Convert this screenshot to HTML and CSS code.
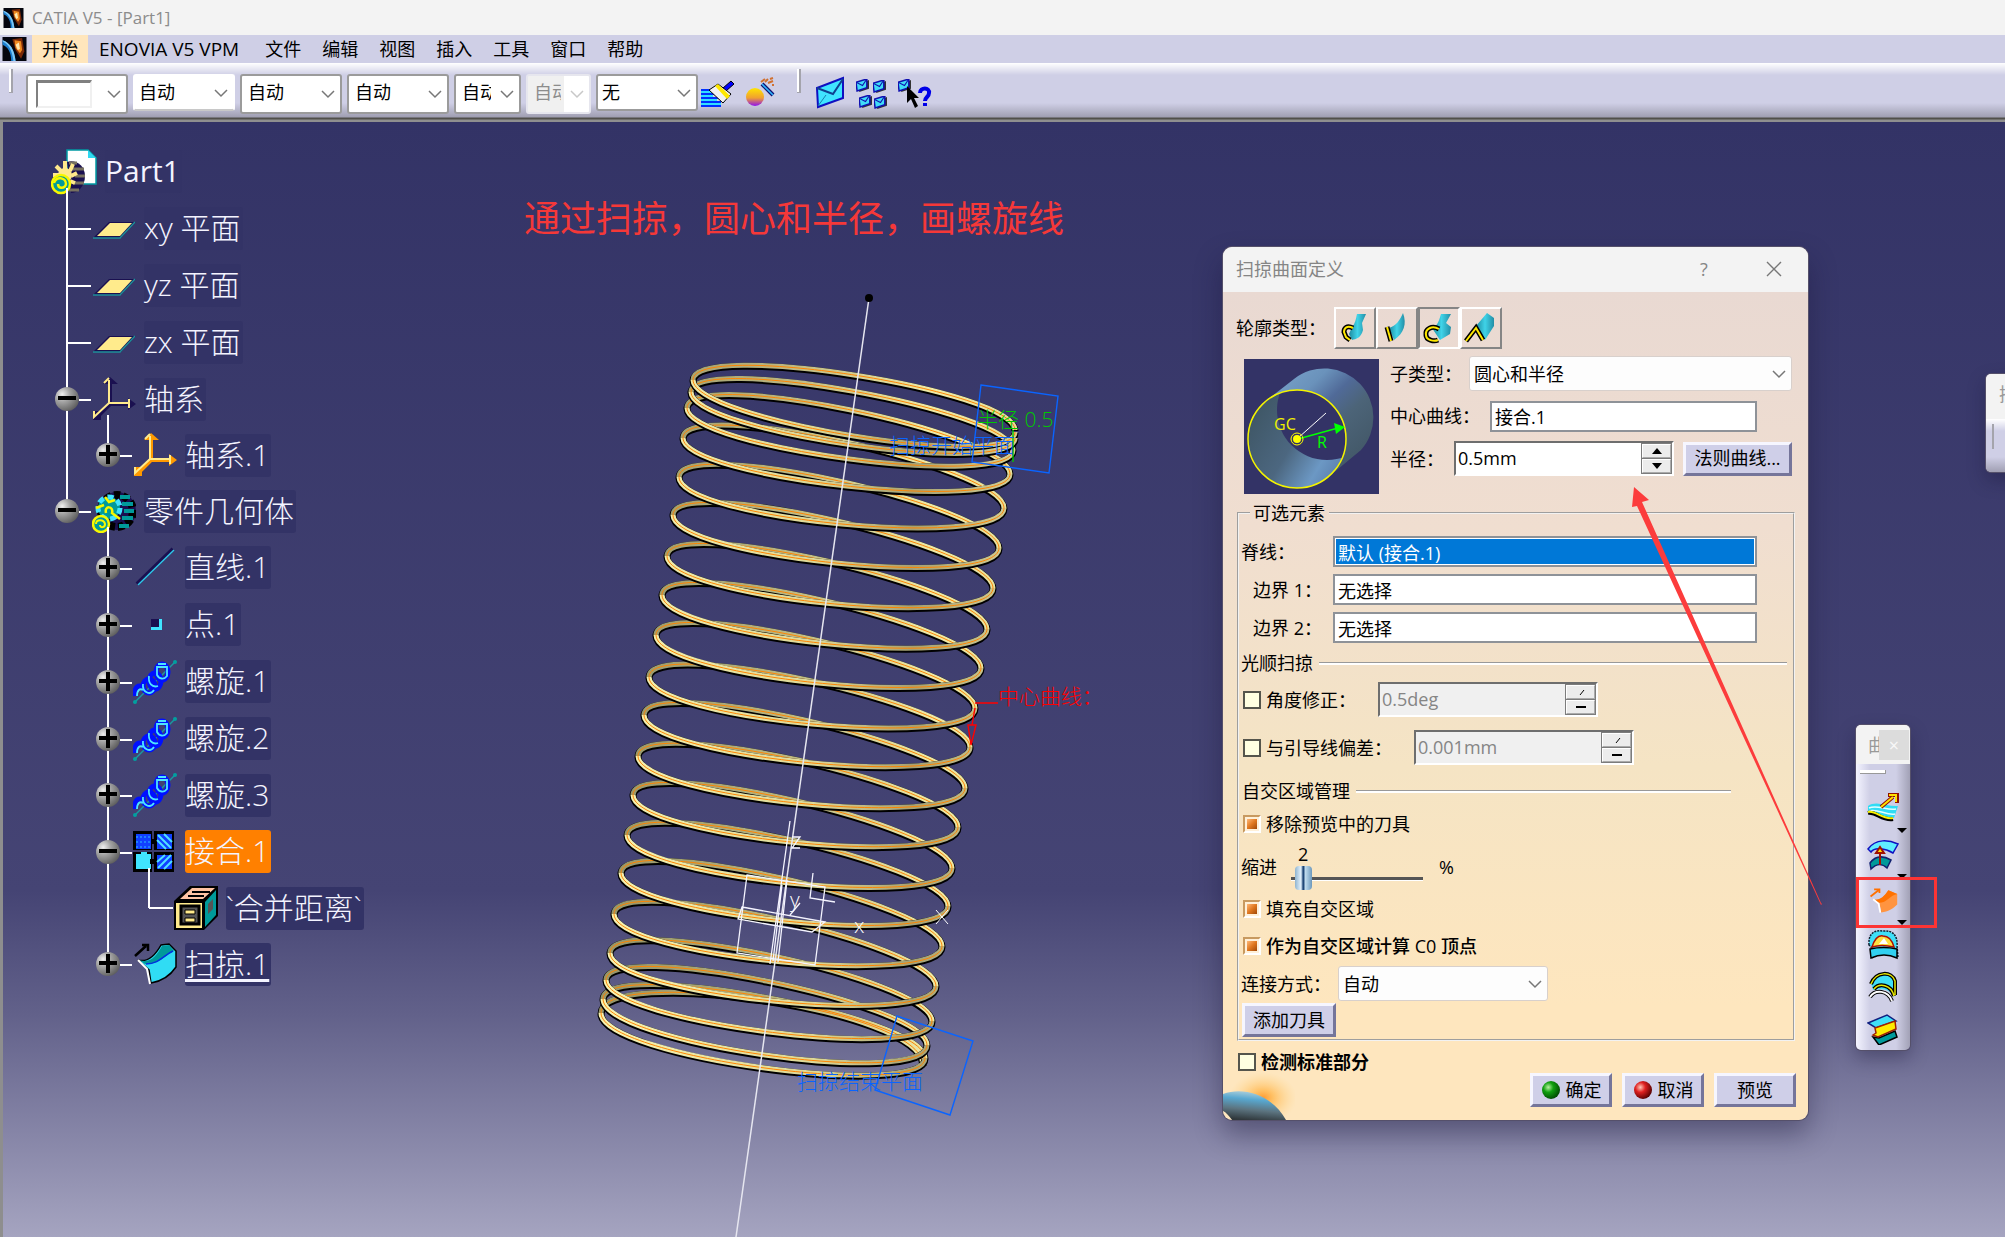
FILE: index.html
```html
<!DOCTYPE html>
<html lang="zh-CN">
<head>
<meta charset="utf-8">
<title>CATIA V5 - [Part1]</title>
<link rel="stylesheet" href="styles.css">
</head>
<body>
<svg class="defs" aria-hidden="true">
  <defs>
    <radialGradient id="ball" cx=".3" cy=".3" r=".8"><stop offset="0" stop-color="#f0f0f0"/><stop offset=".4" stop-color="#a4a4a4"/><stop offset="1" stop-color="#5a5a5a"/></radialGradient>
    <radialGradient id="green" cx=".35" cy=".35" r=".7"><stop offset="0" stop-color="#b8f0a0"/><stop offset=".4" stop-color="#10a010"/><stop offset="1" stop-color="#004800"/></radialGradient>
    <radialGradient id="red" cx=".35" cy=".35" r=".7"><stop offset="0" stop-color="#ffc8b8"/><stop offset=".4" stop-color="#e02020"/><stop offset="1" stop-color="#500000"/></radialGradient>
    <linearGradient id="sphere" x2="0" y2="1"><stop offset="0" stop-color="#ffe600"/><stop offset=".55" stop-color="#f0a030"/><stop offset="1" stop-color="#9010f0"/></linearGradient>
    <linearGradient id="sheet" x2="1"><stop offset="0" stop-color="#1d8ba0"/><stop offset=".5" stop-color="#3fd3e8"/><stop offset="1" stop-color="#238ea6"/></linearGradient>
    <symbol id="chev" viewBox="0 0 14 14"><path d="M1 4l6 6 6-6" fill="none" stroke="#777" stroke-width="1.5"/></symbol>
    <symbol id="logo" viewBox="0 0 22 22"><path fill="#05060e" d="M0 0h22v22H0z"/><path fill="#7a2a08" d="M9 2l9-1 2 12-3 7-5-8z"/><path fill="#f08a20" d="M11 3l6 1 1 8-2 3-4-5z"/><path fill="#ffe9b0" d="M12 7l3-2 1 6-2 1z"/><path fill="#1d7fd0" d="M0 3c7 2 11 9 12 19H8C8 14 5 9 0 7z"/><path fill="#7cc8f4" d="M0 3c7 2 11 9 12 19h-2C9 13 6 7 0 4z"/></symbol>
    <symbol id="plus" viewBox="0 0 24 24"><circle cx="12" cy="12" r="12" fill="url(#ball)"/><path d="M3 11h18M12 2v19" stroke="#000" stroke-width="4"/></symbol>
    <symbol id="minus" viewBox="0 0 24 24"><circle cx="12" cy="12" r="12" fill="url(#ball)"/><path d="M3 11h18" stroke="#000" stroke-width="4"/></symbol>
    <symbol id="plane" viewBox="0 0 44 44"><path d="M1 31L17 15h27L29 31z" fill="#1a1050"/><path d="M1 31h27l15-16" fill="none" stroke="#1f8f99" stroke-width="1.5"/><path d="M5 29l13-13h22L28 29z" fill="#ffeb8c"/></symbol>
    <symbol id="helix" viewBox="0 0 44 44"><path d="M1 43L43 1" stroke="#1a9aa0" stroke-width="1.5"/><circle cx="2" cy="42" r="2" fill="#00a0a0"/><circle cx="42" cy="2" r="2" fill="#00a0a0"/><g fill="none"><g stroke="#0010ff" stroke-width="5"><path d="M2 36c-1-10 4-12 9-8"/><ellipse cx="16" cy="26" rx="6" ry="7"/><ellipse cx="22" cy="21" rx="6" ry="8"/><ellipse cx="29" cy="12" rx="6" ry="8"/></g><g stroke="#4de4ff" stroke-width="1.8"><path d="M4 36c0-6 3-8 6-6M10 24c-1 8 7 12 11 6M16 16c-1 7 3 12 9 10"/><path d="M24 7h10v9c-3 4-8 3-10-1zM25 4h8"/></g></g></symbol>
    <symbol id="axes" viewBox="0 0 44 44"><path d="M18 5v22h23M18 27L4 41" fill="none" stroke="currentColor" stroke-width="4"/><path d="M18 0l8 7H11zM44 27l-8-6v12zM1 34h8v9H1z" fill="currentColor"/><path d="M17 3v23h21M17 26L2 40v-6M17 1l-5 5M37 22v9" fill="none" stroke="#ffeb8c" stroke-width="2"/></symbol>
    <symbol id="mini-mail" viewBox="0 0 12 12"><path d="M2 5l10-4v8L3 12z" fill="#333"/><path d="M0 3l10-3v8L1 11z" fill="#40dcf8" stroke="#1010b0" stroke-width="1.4"/><path d="M0 3l6 3 4-6" fill="none" stroke="#1010b0"/></symbol>
  </defs>
</svg>

<header class="titlebar"><svg class="app-icon"><use href="#logo"/></svg><span>CATIA V5 - [Part1]</span></header>

<nav class="menubar">
  <svg class="doc-icon"><use href="#logo"/></svg>
  <button class="menu active">开始</button><button class="menu latin">ENOVIA V5 VPM</button><button class="menu">文件</button><button class="menu">编辑</button><button class="menu">视图</button><button class="menu">插入</button><button class="menu">工具</button><button class="menu">窗口</button><button class="menu">帮助</button>
</nav>

<div class="toolbar">
  <span class="grip"></span>
  <div class="graphic">
    <div class="combo swatch"><select aria-label="颜色"><option></option></select><i></i><svg><use href="#chev"/></svg></div>
    <div class="combo short"><select aria-label="透明度"><option>自动</option></select><svg><use href="#chev"/></svg></div>
    <div class="combo"><select aria-label="线宽"><option>自动</option></select><svg><use href="#chev"/></svg></div>
    <div class="combo"><select aria-label="线型"><option>自动</option></select><svg><use href="#chev"/></svg></div>
    <div class="combo narrow"><select aria-label="点符号"><option>自动</option></select><svg><use href="#chev"/></svg></div>
    <div class="combo narrow off"><select aria-label="渲染样式" disabled><option>自动</option></select><svg><use href="#chev"/></svg></div>
    <div class="combo short none"><select aria-label="图层"><option>无</option></select><svg><use href="#chev"/></svg></div>
  </div>
  <div class="tools">
    <button class="tool" aria-label="格式刷"><svg viewBox="0 0 36 34"><g stroke-width="2"><path d="M0 14h14M0 18h15M0 22h18M0 26h20M0 30h20" stroke="#0030ff"/><path d="M0 16h10M0 20h12M0 24h16M0 28h20" stroke="#30dfff"/></g><path d="M22 12l8-7 3 3-8 7z" fill="#00f" stroke="#000"/><path d="M8 14l9-6 13 10-8 9z" fill="#f2f2f2" stroke="#000"/><path d="M14 10l12 13 3-3L17 8z" fill="#ffe800"/></svg></button>
    <button class="tool" aria-label="图形特性向导"><svg viewBox="0 0 36 34"><circle cx="12" cy="21" r="9" fill="url(#sphere)"/><path d="M19 8l11 11" stroke="#101070" stroke-width="4"/><path d="M19 8l11 11" stroke="#30b8ff" stroke-width="1.6"/><path d="M18 6l4-3M22 6l3-3M27 3l3-1M25 7l5-2M29 9h2" stroke="#d07030" stroke-width="2"/></svg></button>
    <span class="grip"></span>
    <button class="tool mail" aria-label="发送"><svg viewBox="0 0 36 34"><path d="M4 12L30 2v20L5 31z" fill="#40e4ff" stroke="#1010c0" stroke-width="2"/><path d="M4 12l16 6L30 3" fill="none" stroke="#104090" stroke-width="2"/><path d="M5 30l8-11" stroke="#1880b0"/></svg></button>
    <button class="tool" aria-label="发送到"><svg viewBox="0 0 36 34"><use href="#mini-mail" x="1" y="3" width="13" height="13"/><use href="#mini-mail" x="18" y="4" width="13" height="13"/><use href="#mini-mail" x="4" y="19" width="13" height="13"/><use href="#mini-mail" x="19" y="20" width="13" height="13"/></svg></button>
    <button class="tool" aria-label="这是什么？"><svg viewBox="0 0 36 34"><use href="#mini-mail" x="1" y="3" width="13" height="13"/><path d="M10 10v17l4-4 4 9 3-2-4-8h5z"/><path d="M23 17c0-6 10-6 9 0 0 4-4 4-4 8M28 27v3" fill="none" stroke="#0000e8" stroke-width="4"/></svg></button>
  </div>
</div>

<main class="viewport">
  <svg class="scene">
    <defs>
      <linearGradient id="frontTube" gradientUnits="userSpaceOnUse" x1="620" x2="1010" y1="0" y2="0"><stop offset="0" stop-color="#f6f2b0"/><stop offset=".5" stop-color="#ddd898"/><stop offset=".75" stop-color="#a4a174"/><stop offset="1" stop-color="#d2cd94"/></linearGradient>
      <linearGradient id="backTube" gradientUnits="userSpaceOnUse" x1="620" x2="1010" y1="0" y2="0"><stop offset="0" stop-color="#96966a"/><stop offset=".4" stop-color="#b8b480"/><stop offset=".8" stop-color="#efeaa6"/><stop offset="1" stop-color="#e4de9c"/></linearGradient>
      <path id="back" d="M693 380C693 340 1015 390 1015 430M691 392C691 352 1013 410 1013 450M687 408C687 366 1010 432 1010 474M683 438C683 396 1004 466 1004 508M679 477C679 435 999 506 999 548M673 515C673 473 993 546 993 588M667 556C667 514 987 587 987 629M662 595C662 553 981 626 981 668M656 635C656 593 975 666 975 708M649 677C649 635 970 705 970 747M644 715C644 673 965 746 965 788M638 756C638 714 958 785 958 827M633 795C633 753 952 826 952 868M627 835C627 793 948 864 948 906M621 873C621 831 942 904 942 946M614 914C614 872 936 944 936 986M610 953C610 911 932 979 932 1021M606 980C606 938 927 1003 927 1045M603 999C603 957 925 1016 925 1058M601 1013C601 965 923 1008 923 1065"/>
      <path id="front" d="M693 380C693 420 1015 472 1015 432M691 392C691 432 1015 478 1015 438M687 408C687 448 1013 490 1013 450M683 438C683 478 1010 514 1010 474M679 477C679 519 1004 550 1004 508M673 515C673 557 999 590 999 548M667 556C667 598 993 630 993 588M662 595C662 637 987 671 987 629M656 635C656 677 981 710 981 668M649 677C649 719 975 750 975 708M644 715C644 757 970 789 970 747M638 756C638 798 965 830 965 788M633 795C633 837 958 869 958 827M627 835C627 877 952 910 952 868M621 873C621 915 948 948 948 906M614 914C614 956 942 988 942 946M610 953C610 995 936 1028 936 986M606 980C606 1022 932 1063 932 1021M603 999C603 1043 927 1089 927 1045M601 1013C601 1057 925 1100 925 1058"/>
    </defs>
    <g transform="translate(-3 -122)" fill="none">
      <g class="coil">
        <use href="#back" stroke="#000" stroke-width="7" y="1"/><use href="#back" stroke="url(#backTube)" stroke-width="5"/><use href="#back" stroke="#ff8400" stroke-width="1"/>
        <use href="#front" stroke="#000" stroke-width="7" y="1"/><use href="#front" stroke="url(#frontTube)" stroke-width="5"/><use href="#front" stroke="#ff8400" stroke-width="1"/>
      </g>
      <path d="M869 298L736 1237" stroke="#e6e6f0" stroke-width="1.5"/>
      <circle cx="869" cy="298" r="4" fill="#000"/>
      <g stroke="#f4f4ff" stroke-width="1.3">
        <path d="M747 875L825 887L815 965L737 953zM742 907L825 922L812 932L738 919zM790 821L770 964M782 885l-9 76M787 880l-9 82M813 873l-3 25 25 4M792 837h8l-8 11h8M790 915l10-12"/>
      </g>
      <g stroke="#0a64ff" stroke-width="1.4"><path d="M981 385L1058 396L1049 473L972 462zM897 1016L973 1041L950 1115L875 1090z"/></g>
      <path d="M975 703h23M975 708l-3 17h-4l3 20 5-20h-4" stroke="#f00" stroke-width="1.4"/>
      <path d="M1013 430v32" stroke="#00c800" stroke-width="1.4"/>
      <path d="M936 910l12 14M948 910l-12 14" stroke="#fff"/>
      <g class="marks" stroke="none">
        <text x="977" y="427" fill="#00c800">半径 0.5</text>
        <text x="889" y="453" fill="#0a64ff">扫掠开始平面</text>
        <text x="797" y="1089" fill="#0a64ff">扫掠结束平面</text>
        <text x="998" y="704" fill="#f00">中心曲线：</text>
        <text x="790" y="907" fill="#fff">y</text>
        <text x="854" y="933" fill="#fff">x</text>
      </g>
    </g>
  </svg>

  <p class="note">通过扫掠，圆心和半径，画螺旋线</p>

  <section class="tree">
    <div class="row root"><svg class="part" viewBox="0 0 46 46"><path d="M16 1h21l8 8v26H16z" fill="#fff" stroke="#009aa4" stroke-width="1.5"/><path d="M37 1v8h8z" fill="#30d8f0"/><path d="M16 13c8-3 18 3 18 14s-8 17-14 17z" fill="#1a1050"/><path d="M18 14h8M22 20h11M24 27h10M22 34h11M18 41h10" stroke="#77715f" stroke-width="3"/><path d="M14 12v8M5 17l5 5M22 15l-3 7M2 26h8M26 24l-6 3M24 34l-5-2" stroke="#ffe98c" stroke-width="4"/><circle cx="14" cy="26" r="7" fill="#ffe98c"/><circle cx="10" cy="35" r="9" fill="#009a9a" stroke="#f8f800" stroke-width="2.5"/><path d="M3 34c2-7 12-6 12 1-1 5-8 5-8 0" fill="none" stroke="#f8f800" stroke-width="2.5"/></svg><span class="name">Part1</span></div>
    <ul>
      <li><div class="row"><i class="tick"></i><svg class="ico"><use href="#plane"/></svg><span class="name">xy 平面</span></div></li>
      <li><div class="row"><i class="tick"></i><svg class="ico"><use href="#plane"/></svg><span class="name">yz 平面</span></div></li>
      <li><div class="row"><i class="tick"></i><svg class="ico"><use href="#plane"/></svg><span class="name">zx 平面</span></div></li>
      <li><div class="row tight"><button class="knob" aria-label="收起"><svg><use href="#minus"/></svg></button><svg class="ico"><use href="#axes"/></svg><span class="name">轴系</span></div>
        <ul><li><div class="row tight"><button class="knob" aria-label="展开"><svg><use href="#plus"/></svg></button><svg class="ico bright"><use href="#axes"/></svg><span class="name">轴系.1</span></div></li></ul>
      </li>
      <li><div class="row tight"><button class="knob" aria-label="收起"><svg><use href="#minus"/></svg></button><svg class="ico" viewBox="0 0 44 44"><circle cx="25" cy="22" r="19" fill="#1a1050"/><circle cx="25" cy="22" r="16" fill="none" stroke="#000" stroke-width="8" stroke-dasharray="6 3"/><path d="M28 8h10M30 15h11M32 22h10M30 29h11M27 37h10" stroke="#009a9a" stroke-width="4"/><circle cx="17" cy="19" r="11" fill="#009a9a" stroke="#40e4ff" stroke-width="5" stroke-dasharray="6 4"/><path d="M13 8l4 5 6-2M4 19l8-3M14 24c-2-8 8-7 6 0l8 6" fill="none" stroke="#f8f800" stroke-width="2.5"/><circle cx="9" cy="35" r="8" fill="#009a9a" stroke="#f8f800" stroke-width="2.5"/><path d="M4 35c0-5 8-5 9 0 0 4-5 4-5 1" fill="none" stroke="#f8f800" stroke-width="2"/></svg><span class="name">零件几何体</span></div>
        <ul>
          <li><div class="row"><button class="knob" aria-label="展开"><svg><use href="#plus"/></svg></button><svg class="ico" viewBox="0 0 44 44"><path d="M4 38L40 3" stroke="#1a1050" stroke-width="4"/><path d="M5 39L41 4" stroke="#30c8e8" stroke-width="1.5"/></svg><span class="name">直线.1</span></div></li>
          <li><div class="row"><button class="knob" aria-label="展开"><svg><use href="#plus"/></svg></button><svg class="ico" viewBox="0 0 44 44"><path d="M18 16h11v11H18z" fill="#40e4ff"/><path d="M18 16h8v8h-8z" fill="#1a1050"/></svg><span class="name">点.1</span></div></li>
          <li><div class="row"><button class="knob" aria-label="展开"><svg><use href="#plus"/></svg></button><svg class="ico"><use href="#helix"/></svg><span class="name">螺旋.1</span></div></li>
          <li><div class="row"><button class="knob" aria-label="展开"><svg><use href="#plus"/></svg></button><svg class="ico"><use href="#helix"/></svg><span class="name">螺旋.2</span></div></li>
          <li><div class="row tight"><button class="knob" aria-label="展开"><svg><use href="#plus"/></svg></button><svg class="ico"><use href="#helix"/></svg><span class="name">螺旋.3</span></div></li>
          <li><div class="row"><button class="knob" aria-label="收起"><svg><use href="#minus"/></svg></button><svg class="ico" viewBox="0 0 44 44"><path d="M0 1h41v41H0z" fill="#000"/><path d="M3 4h15v15H3zM24 4h15v15H24zM24 25h15v14H24z" fill="#1040ff"/><path d="M3 24h5v-3h6v3h4v15H3z" fill="#40e4ff"/><path d="M3 7h15M3 12h15M3 17h15" stroke="#30c0f8" stroke-dasharray="2 2"/><path d="M25 5l13 13M31 4l8 8M24 10l9 9M25 38l13-13M24 32l8-7M31 39l8-8" stroke="#50e0ff" stroke-width="2"/><path d="M20 0v42M0 21h42" stroke="#3c3c6c" stroke-width="2"/><path d="M18 9h5v5h-5zM17 29h5v5h-5z"/></svg><span class="name selected">接合.1</span></div>
            <ul><li><div class="row tight"><i class="tick"></i><svg class="ico" viewBox="0 0 44 44"><path d="M0 15L16 0h28v30L30 44H0z" fill="#000"/><path d="M6 13L18 2h23L29 13z" fill="#ffc4a4"/><path d="M14 10h16M18 6h18" stroke="#000" stroke-width="2"/><path d="M31 16L42 4v25L31 41z" fill="#009a9a"/><path d="M34 18v10l5-5V13z" fill="#555"/><path d="M2 17h26v25H2z" fill="#ffeb8c"/><path d="M7 20h18v18H7z" fill="#555" stroke="#000" stroke-width="3"/><path d="M11 24h10v4H11zM11 32h10v4H11z" fill="#ffeb8c" stroke="#000"/></svg><span class="name">`合并距离`</span></div></li></ul>
          </li>
          <li><div class="row tight"><button class="knob" aria-label="展开"><svg><use href="#plus"/></svg></button><svg class="ico" viewBox="0 0 44 44"><path d="M2 14L13 4M9 3h6v6" fill="none" stroke="#000" stroke-width="2.5"/><path d="M5 18c10 3 18-6 23-15l8-1 7 7v16c-6 9-13 14-25 16L16 28z" fill="#30dcf4" stroke="#000" stroke-width="1.5"/><path d="M6 18c12 4 18-5 23-14l7-1 5 6C30 14 28 22 12 22z" fill="#009a9a"/><path d="M13 22c13 0 18-9 27-13" fill="none" stroke="#0030e0" stroke-width="1.5"/><path d="M5 18l9 9 3 15" fill="none" stroke="#fff" stroke-width="2"/></svg><span class="name current">扫掠.1</span></div></li>
        </ul>
      </li>
    </ul>
  </section>

  <section class="dialog" role="dialog" aria-label="扫掠曲面定义">
    <header><h2>扫掠曲面定义</h2><button aria-label="帮助">?</button><button aria-label="关闭"><svg viewBox="0 0 16 16"><path d="M1 1l14 14M15 1L1 15" stroke="#777" stroke-width="1.4"/></svg></button></header>
    <form>
      <div class="profile"><span>轮廓类型：</span>
        <button type="button" aria-label="显式"><svg viewBox="0 0 36 36"><path d="M20 4h9l-4 9 1 7c-2 8-7 9-11 10l-3-6 3-7c3-3 4-8 5-13z" fill="url(#sheet)"/><path class="pf" d="M16 18c-6-3-9 0-9 4l2 5 4 3"/><path class="py" d="M16 18c-6-3-9 0-9 4l2 5 4 3"/></svg></button>
        <button type="button" aria-label="直线"><svg viewBox="0 0 36 36"><path d="M24 3c4 11 1 20-9 27L10 18c7-2 11-8 14-15z" fill="url(#sheet)"/><path class="pf" d="M8 17l4 14"/><path class="py" d="M8 17l4 14"/></svg></button>
        <button type="button" class="down" aria-label="圆"><svg viewBox="0 0 36 36"><path d="M20 4h10l-5 9 5 4-1 7-10 6-8-12c5-1 7-7 9-14z" fill="url(#sheet)"/><path class="pf" d="M18 19c-7-4-14 0-13 6 0 5 8 7 12 5"/><path class="py" d="M18 19c-7-4-14 0-13 6 0 5 8 7 12 5"/></svg></button>
        <button type="button" aria-label="二次曲线"><svg viewBox="0 0 36 36"><path d="M24 3l7 5v8l-9 14-9-14z" fill="url(#sheet)"/><path class="pf" d="M3 31l10-13 7 12"/><path class="py" d="M3 31l10-13 7 12"/></svg></button>
      </div>
      <div class="params">
        <svg class="preview" viewBox="0 0 135 135"><defs><linearGradient id="tube" x1="0" y1="0" x2="1" y2="1"><stop offset="0" stop-color="#7fa9d0"/><stop offset=".3" stop-color="#6a92bb"/><stop offset=".45" stop-color="#506a98"/><stop offset=".6" stop-color="#4c6478"/><stop offset="1" stop-color="#3e5260"/></linearGradient><linearGradient id="inner" x1="0" x2="1" y1=".4" y2="1"><stop offset="0" stop-color="#405868"/><stop offset=".4" stop-color="#4c6780"/><stop offset=".7" stop-color="#6c98c4"/><stop offset="1" stop-color="#5070a0"/></linearGradient><clipPath id="mouth"><circle cx="53" cy="80" r="49"/></clipPath></defs><path fill="#333366" d="M0 0h135v135H0z"/><path d="M18 45L50 20A49 49 0 0 1 117 91L88 115z" fill="url(#tube)"/><circle cx="53" cy="80" r="49" fill="url(#inner)"/><circle cx="83" cy="51" r="50" fill="#333366" clip-path="url(#mouth)"/><circle cx="53" cy="80" r="49" fill="none" stroke="#f4f400" stroke-width="1.5"/><path d="M54 79l28-25" stroke="#fff"/><path d="M54 80l40-11" stroke="#0f0" stroke-width="1.5"/><path d="M90 64l11 4-9 7z" fill="#0f0"/><circle cx="53" cy="80" r="6" fill="none" stroke="#ff0"/><circle cx="53" cy="80" r="4" fill="#ff0"/><text x="30" y="71" fill="#f0f000">GC</text><text x="73" y="89" fill="#0f0">R</text></svg>
        <div class="fields">
          <div class="field"><label for="sub">子类型：</label><div class="combo wide"><select id="sub"><option>圆心和半径</option></select><svg><use href="#chev"/></svg></div></div>
          <div class="field center"><label for="cc">中心曲线：</label><input id="cc" class="box" value="接合.1"></div>
          <div class="field radius"><label for="rad">半径：</label><div class="spin"><input id="rad" value="0.5mm"><span><button type="button" aria-label="增加"><svg viewBox="0 0 10 6"><path d="M5 0l5 6H0z"/></svg></button><button type="button" aria-label="减少"><svg viewBox="0 0 10 6"><path d="M5 6L0 0h10z"/></svg></button></span></div><button type="button" class="push law">法则曲线...</button></div>
        </div>
      </div>
      <fieldset>
        <legend>可选元素</legend>
        <div class="elements">
          <label for="spine">脊线：</label><input id="spine" class="box picked" value="默认 (接合.1)">
          <label for="b1" class="in">边界 1：</label><input id="b1" class="box" value="无选择">
          <label for="b2" class="in">边界 2：</label><input id="b2" class="box" value="无选择">
        </div>
        <h3 class="smooth">光顺扫掠</h3>
        <div class="opt"><label class="check"><input type="checkbox">角度修正：</label><div class="spin off"><input value="0.5deg" aria-label="角度修正值" disabled><span><button type="button" disabled aria-label="增加"><svg viewBox="0 0 10 6"><path d="M4 6l4-5" stroke="#000"/></svg></button><button type="button" disabled aria-label="减少"><svg viewBox="0 0 10 6"><path d="M0 2h10v2H0z"/></svg></button></span></div></div>
        <div class="opt second"><label class="check"><input type="checkbox">与引导线偏差：</label><div class="spin off"><input value="0.001mm" aria-label="偏差值" disabled><span><button type="button" disabled aria-label="增加"><svg viewBox="0 0 10 6"><path d="M4 6l4-5" stroke="#000"/></svg></button><button type="button" disabled aria-label="减少"><svg viewBox="0 0 10 6"><path d="M0 2h10v2H0z"/></svg></button></span></div></div>
        <h3 class="twist">自交区域管理</h3>
        <label class="check row-check"><input type="checkbox" checked>移除预览中的刀具</label>
        <div class="setback"><label for="sb">缩进</label><div class="slide"><output for="sb">2</output><input id="sb" type="range" min="0" max="60" value="2"></div><span>%</span></div>
        <label class="check fill"><input type="checkbox" checked>填充自交区域</label>
        <label class="check strong"><input type="checkbox" checked>作为自交区域计算 C0 顶点</label>
        <div class="connect"><label for="cm">连接方式：</label><div class="combo wide"><select id="cm"><option>自动</option></select><svg><use href="#chev"/></svg></div></div>
        <button type="button" class="push add">添加刀具</button>
      </fieldset>
      <label class="check canon"><input type="checkbox">检测标准部分</label>
      <footer>
        <button type="button" class="push"><svg viewBox="0 0 20 20"><circle cx="10" cy="10" r="9" fill="url(#green)"/></svg>确定</button>
        <button type="button" class="push"><svg viewBox="0 0 20 20"><circle cx="10" cy="10" r="9" fill="url(#red)"/></svg>取消</button>
        <button type="button" class="push">预览</button>
      </footer>
    </form>
    <svg class="globe" viewBox="0 0 72 48"><defs><radialGradient id="sun"><stop offset="0" stop-color="#ff9a30"/><stop offset=".3" stop-color="#ffb850" stop-opacity=".8"/><stop offset="1" stop-color="#ffd890" stop-opacity="0"/></radialGradient><linearGradient id="earth" x1=".6" y1="0" x2=".4" y2="1"><stop offset="0" stop-color="#b8d4dc"/><stop offset=".3" stop-color="#58a8d0"/><stop offset=".65" stop-color="#5c7480"/><stop offset="1" stop-color="#30383c"/></linearGradient></defs><ellipse cx="40" cy="26" rx="34" ry="26" fill="url(#sun)"/><path d="M0 22C22 14 50 24 63 48H9C6 44 3 40 0 39z" fill="url(#earth)"/></svg>
  </section>

  <aside class="palette" aria-label="曲面">
    <header><span>曲</span><button aria-label="关闭">×</button></header>
    <i class="bar"></i>
    <button class="tool more" aria-label="拉伸"><svg viewBox="0 0 32 32"><path d="M1 13c8-6 20 1 30 0l-4 12C17 26 9 18 1 19z" fill="#30dcf4"/><path d="M2 15c8-4 18 3 27 1M2 18c8-3 18 5 26 3" fill="none" stroke="#e0ffff" stroke-width="1.5"/><path d="M1 20c8-2 14 8 25 6" fill="none" stroke="#000" stroke-width="4"/><path d="M1 19c8-2 14 8 25 6" fill="none" stroke="#f8f000" stroke-width="2"/><path d="M14 14l12-10M21 2h9v8" fill="none" stroke="#901000" stroke-width="4"/><path d="M14 14l12-10M22 2h7v7" fill="none" stroke="#ffe000" stroke-width="2"/></svg></button>
    <button class="tool more" aria-label="偏移"><svg viewBox="0 0 32 32"><path d="M1 10C9-1 22 1 31 5l-5 9C18 9 7 8 4 13z" fill="#60ecff" stroke="#1010c0" stroke-width="1.5"/><path d="M3 24c6-8 14-7 21-3l-4 8c-5-5-11-4-16 1z" fill="#009a9a" stroke="#102070" stroke-width="1.5"/><path d="M13 26V14h-4l4-6 4 6h-3" fill="#ffe000" stroke="#a01000" stroke-width="2"/></svg></button>
    <button class="tool more" aria-label="扫掠"><svg viewBox="0 0 36 32"><path d="M4 11L14 3M8 3h6v4" fill="none" stroke="#ff7000" stroke-width="2"/><path d="M7 14c6 2 12-2 17-10l10 4v12c-5 5-10 8-18 9l-2-11z" fill="#ff9440"/><path d="M7 14c6 2 12-2 17-10l10 4c-8 1-11 10-21 10z" fill="#ff7200"/><path d="M7 14l6 5 2 10" fill="none" stroke="#fff" stroke-width="2"/></svg></button>
    <button class="tool" aria-label="填充"><svg viewBox="0 0 32 32"><path d="M2 16C1 3 9 1 16 2c9-1 15 4 14 15l1 11c-9-4-18-4-26 1V19z" fill="#40e0f8" stroke="#102030" stroke-width="1.5" stroke-dasharray="2 1"/><path d="M5 18C8 9 12 6 16 7c5 0 9 4 11 11-8-2-16-2-22 0z" fill="#ffe040" stroke="#b01000" stroke-width="1.5"/><path d="M12 15l5-6 4 6z" fill="#fff"/><path d="M3 20c9-2 18-2 27 0v9c-9-4-17-4-26 0z" fill="#30d0f0" stroke="#000" stroke-width="1.5"/></svg></button>
    <button class="tool" aria-label="多截面曲面"><svg viewBox="0 0 32 32"><path d="M4 12C10 0 24 0 28 8l-1 18C22 16 12 18 6 19z" fill="#40e0f8"/><g fill="none" stroke="#000" stroke-width="4"><path d="M4 13C9 0 25 0 28 10v14M7 18c5-6 17-5 20 7"/></g><g fill="none" stroke="#e8e800" stroke-width="1.5"><path d="M4 13C9 0 25 0 28 10v14M7 18c5-6 17-5 20 7"/></g><path d="M3 26c5-8 18-7 22 4" fill="none" stroke="#000" stroke-width="4"/><path d="M3 26c5-8 18-7 22 4" fill="none" stroke="#fff" stroke-width="2"/></svg></button>
    <button class="tool" aria-label="桥接曲面"><svg viewBox="0 0 32 32"><path d="M1 10L20 2l9 6-20 7z" fill="#40e0f8" stroke="#102080" stroke-width="1.5"/><path d="M6 24l6 1 16-7 2 6-18 8z" fill="#009a9a" stroke="#000" stroke-width="1.5"/><path d="M8 15l20-7 1 8-18 8-5-2 3-2z" fill="#ffec00" stroke="#a02000" stroke-width="1.5"/></svg></button>
  </aside>

  <aside class="stub"><header>插</header><div><span class="grip"></span></div></aside>

  <svg class="callout"><g transform="translate(-3 -122)"><path d="M1634 487l15 13-7 2L1821 903l1 1-1 1L1637 506l-5 1z" fill="#fc3c3c"/><path d="M1857.500 878.500h78v48h-78z" fill="none" stroke="#fc3434" stroke-width="3"/></g></svg>
</main>
</body>
</html>
```
FILE: styles.css
```css
* { box-sizing: border-box; }
body { margin: 0; min-height: 100vh; display: flex; flex-direction: column; font: 18px/24px "Open Sans", "Noto Sans CJK SC", sans-serif; color: #000; background: #333366; overflow: hidden; }
button, input, select { font: inherit; color: inherit; margin: 0; padding: 0; border: 0; border-radius: 0; background: none; outline: 0; }
ul { list-style: none; margin: 0; padding: 0; }
svg { display: block; flex: none; }
.defs { position: absolute; width: 0; height: 0; }

.titlebar { height: 35px; display: flex; align-items: center; gap: 8px; padding-left: 3px; background: #f3f3f3; color: #8c8c8c; font-size: 17px; }
.app-icon { width: 21px; height: 20px; }
.menubar { height: 28px; display: flex; align-items: center; background: #cfcfe6; }
.doc-icon { width: 28px; height: 24px; margin-right: 4px; padding: 0 0 0 1px; }
.menu { height: 28px; padding: 0 10px 0 11px; line-height: 26px; }
.menu.active { background: #ffe6bc; padding: 0 10px; }
.menu.latin { font-size: 19px; padding-right: 15px; }

.toolbar { height: 59px; display: flex; align-items: flex-start; padding: 6px 0 0 9px; background: linear-gradient(#fff, #cfcfe6 12px, #cfcfe6 40px, #a09fb2 54px, #504f4a 55px, #504f4a 56px, #8f8f8f 57px, #8f8f8f); }
.grip { flex: none; width: 4px; height: 24px; background: #fff; border-right: 2px solid #a4a4ac; border-bottom: 1px solid #a4a4ac; }
.graphic { display: flex; gap: 5px; margin: 5px 0 0 13px; align-items: flex-start; }
.combo { display: grid; width: 102px; height: 40px; background: #fff; border: 2px solid #9b9b9b; border-radius: 3px; }
.combo > * { grid-area: 1 / 1; }
.combo select { appearance: none; width: 100%; height: 31px; padding: 0 34px 0 6px; opacity: 1; }
.combo svg { width: 14px; height: 14px; justify-self: end; align-self: center; margin-right: 5px; pointer-events: none; }
.combo.short { height: 37px; }
.combo.short:not(.none) { border-color: #fff #fff #c8c8c8; }
.combo.short:not(.none) select { padding-left: 4px; }
.combo.none select { padding-left: 4px; }
.combo.narrow { width: 67px; }
.combo.narrow select { padding-right: 28px; }
.combo.off { border-color: #e6e6ee; width: 65px; background: linear-gradient(90deg, #f0f0f0 36px, #fff 36px); color: #8c8c8c; }
.combo.off svg { opacity: .4; }
.swatch i { width: 56px; height: 28px; margin: 4px 0 0 8px; border: 2px solid #f0f0f0; border-top: 3px solid #808080; border-left-color: #808080; pointer-events: none; }
.tools { display: flex; align-items: flex-start; margin-left: 3px; }
.tool { width: 36px; height: 34px; flex: none; }
.tool svg { width: 36px; height: 34px; }
.tools .tool { margin: 7px 6px 0 0; }
.tools .grip { margin: 0 12px 0 12px; }
.tools .mail { margin-right: 6px; }

.viewport { flex: 1; position: relative; overflow: hidden; border-left: 3px solid #8e8e8e; background: linear-gradient(#333366, #454474 69%, #62618a 80%, #a5a4c0); }
.scene, .callout { position: absolute; left: 0; top: 0; width: 100%; height: 100%; }
.callout { pointer-events: none; }
.marks { font-size: 21px; font-weight: 300; }
.note { position: absolute; left: 521px; top: 73px; margin: 0; font-size: 36px; line-height: 48px; color: #f53838; white-space: nowrap; }

.tree { position: absolute; left: 52px; top: 21px; color: #f4f4ff; font-size: 30px; }
.tree ul ul { margin-left: 41px; }
.tree li { position: relative; }
.tree li::before { content: ""; position: absolute; left: 11px; top: -12px; bottom: 0; width: 2px; background: #fff; }
.tree li:last-child::before { bottom: auto; height: 40px; }
.row { position: relative; display: flex; align-items: center; height: 57px; }
.row.tight { height: 56px; }
.row.root { margin-left: -4px; gap: 8px; }
.part { width: 46px; height: 46px; }
.tick { width: 24px; height: 2px; margin: 0 1px 0 12px; background: #fff; }
.knob { width: 37px; height: 24px; background: linear-gradient(#fff, #fff) 24px 12px / 12px 2px no-repeat; }
.knob svg { width: 24px; height: 24px; }
.ico { width: 44px; height: 44px; color: #1a1050; }
.ico.bright { color: #ff9900; }
.name { margin-left: 8px; padding: 0 2px 0 0; height: 43px; line-height: 42px; border-radius: 3px; background: #333366; white-space: nowrap; font-weight: 300; }
.root .name { margin-left: 0; font-weight: 400; }
.name.selected { background: #ff8000; }
.name.current { text-decoration: underline; text-underline-offset: 4px; text-decoration-thickness: 3px; text-decoration-skip-ink: none; }

.dialog { position: absolute; right: 197px; top: 125px; width: 585px; border-radius: 9px; overflow: hidden; background: linear-gradient(#e9d9d2 45px, #f0ded0 280px, #f5e4c4 520px, #fee6be 760px); box-shadow: 0 0 0 1px #55506a, 0 14px 28px rgba(20, 18, 50, .4); }
.dialog header { display: flex; align-items: center; height: 45px; padding: 0 24px 2px 13px; background: #f3f3f3; color: #858585; }
.dialog h2 { flex: 1; margin: 0; font: inherit; }
.dialog header button { width: 20px; margin-left: 50px; }
.dialog header svg { width: 16px; height: 16px; margin: 0 2px; }
.dialog form { padding: 15px 13px 13px; }
.profile { display: flex; align-items: center; height: 42px; }
.profile span { width: 98px; }
.profile button { width: 42px; height: 42px; padding: 1px; border: 2px solid; border-color: #fff #858585 #858585 #fff; }
.profile button.down { border-color: #858585 #fff #fff #858585; }
.profile svg { width: 36px; height: 36px; }
.pf, .py { fill: none; stroke: #000; stroke-width: 5; }
.py { stroke: #ffe800; stroke-width: 2; }
.params { display: flex; gap: 11px; margin: 7px 3px 0 8px; }
.preview { width: 135px; height: 135px; margin-top: 3px; font-size: 16px; }
.fields { flex: 1; display: flex; flex-direction: column; gap: 9px; }
.field { display: flex; align-items: center; height: 35px; }
.field label { width: 79px; }
.field.center { height: 32px; padding-right: 35px; }
.field.center label { width: 100px; }
.field.radius label { width: 64px; }
.combo.wide { flex: 1; height: 35px; border: 1px solid #d8d0cc; background: #fdfdfd; }
.combo.wide select { height: 33px; padding-left: 4px; }
.box { flex: 1; min-width: 0; width: 100%; height: 31px; padding: 0 3px; border: 2px solid #8e9298; background: #fff; }
.box.picked { background: #0078d7; color: #fff; box-shadow: inset 0 0 0 1px #fff; }
.spin { flex: none; display: flex; width: 220px; height: 35px; background: #fff; border: 2px solid; border-color: #6e6e6e #fff #fff #6e6e6e; }
.spin input { flex: 1; min-width: 0; padding: 0 2px 2px; }
.spin span { display: grid; grid-template-rows: 1fr 1fr; width: 31px; background: #7c7c7c; padding: 1px; gap: 1px; }
.spin button { display: grid; place-items: center; background: #ececec; border: 1px solid; border-color: #fff #aaa #aaa #fff; }
.spin button svg { width: 10px; height: 6px; }
.spin.off { background: #f0f0f0; color: #858585; }
.push { display: flex; align-items: center; justify-content: center; gap: 5px; height: 34px; padding-bottom: 1px; background: #cfcfe8; border: 3px solid; border-color: #f6f6ff #75759a #75759a #f6f6ff; white-space: nowrap; }
.push svg { width: 20px; height: 20px; }
.push.law { flex: 1; margin-left: 9px; }

fieldset { margin: 8px 0 0 1px; padding: 12px 2px 2px; border: 2px groove #f2f2f2; min-width: 0; }
legend { margin-left: 9px; padding: 0 4px 0 3px; line-height: 22px; height: 22px; }
.elements { display: grid; grid-template-columns: 92px 1fr; gap: 7px 0; align-items: center; padding-right: 34px; }
.elements .in { padding-left: 12px; }
h3 { display: flex; align-items: center; gap: 6px; margin: 8px 4px 0 0; font: inherit; }
h3::after { content: ""; flex: 1; height: 2px; border-top: 1px solid #999; background: #fff; }
h3.twist { margin: 14px 60px 0 1px; }
.opt { display: flex; align-items: center; height: 35px; margin-top: 7px; }
.opt .check { width: 137px; }
.opt.second { margin-top: 13px; }
.opt.second .check { width: 173px; }
.check { display: flex; align-items: center; gap: 5px; height: 22px; padding-left: 2px; white-space: nowrap; }
.check input { appearance: none; flex: none; width: 18px; height: 18px; background: #ffffe1; border: 2px solid #55554c; }
.check input:checked { border-color: #c89a60 #fff #fff #c89a60; background: linear-gradient(135deg, #ffb878, #e07820 50%, #a04808) center / 10px 10px no-repeat, #fff0d8; }
.row-check { margin-top: 10px; }
.setback { display: flex; align-items: center; height: 46px; margin-top: 9px; }
.setback label { width: 50px; }
.slide { width: 132px; margin-right: 16px; }
.slide output { display: block; padding-left: 7px; height: 22px; line-height: 20px; }
.slide input { appearance: none; display: block; width: 132px; height: 24px; background: linear-gradient(#555, #555) 0 11px / 100% 3px no-repeat, linear-gradient(#fff, #fff) 0 14px / 100% 1px no-repeat; }
.slide input::-webkit-slider-thumb { appearance: none; width: 17px; height: 24px; border-radius: 4px; background: linear-gradient(90deg, #8fb4d0, #e4f2fc 6px, #204878 8px, #204878 9px, #c4dff0 10px, #6c98bc); }
.check.fill { margin-top: 8px; }
.check.strong { margin-top: 15px; font-weight: 500; }
.connect { display: flex; align-items: center; margin-top: 9px; }
.connect label { width: 97px; }
.connect .combo { flex: none; width: 210px; }
.add { width: 94px; margin: 2px 0 0 1px; }
.canon { margin: 10px 0 0; font-weight: 700; }
footer { display: flex; justify-content: flex-end; gap: 10px; margin-right: -1px; }
footer .push { width: 82px; }
.globe { position: absolute; left: 0; bottom: 0; width: 72px; height: 48px; }

.palette { position: absolute; right: 95px; top: 603px; width: 54px; height: 325px; display: flex; flex-direction: column; align-items: center; border-radius: 5px; overflow: hidden; background: linear-gradient(90deg, #f4f4ff, #cfcfe6 14px, #cfcfe6 40px, #a2a1b6); box-shadow: 0 0 0 1px #55506a, 0 8px 18px rgba(20, 18, 50, .35); }
.palette header { display: flex; align-items: center; align-self: stretch; height: 45px; padding: 0 1px 0 12px; background: #f3f3f3; color: #999; }
.palette header span { width: 11px; overflow: hidden; }
.palette header button { width: 30px; height: 30px; background: #dcdcdc; color: #f8f8f8; }
.bar { align-self: flex-start; width: 26px; height: 4px; margin: 6px 0 12px 4px; background: #fff; border-bottom: 1px solid #999; border-right: 1px solid #999; }
.palette .tool { position: relative; height: 42px; display: grid; place-items: center; }
.palette .tool svg { width: 32px; height: 32px; }
.palette .more { height: 46px; }
.palette .more::after { content: ""; position: absolute; right: -6px; bottom: -1px; border: 5px solid transparent; border-top-color: #000; border-bottom: 0; }

.stub { position: absolute; right: -60px; top: 252px; width: 79px; height: 98px; border-radius: 5px; overflow: hidden; background: #cfcfe6; box-shadow: 0 0 0 1px #55506a, 0 8px 18px rgba(20, 18, 50, .35); }
.stub header { height: 45px; padding: 8px 0 0 13px; background: #f3f3f3; color: #999; }
.stub div { height: 53px; padding: 5px 6px; background: linear-gradient(#fff, #cfcfe6 12px, #cfcfe6 38px, #a09fb2); }
```
